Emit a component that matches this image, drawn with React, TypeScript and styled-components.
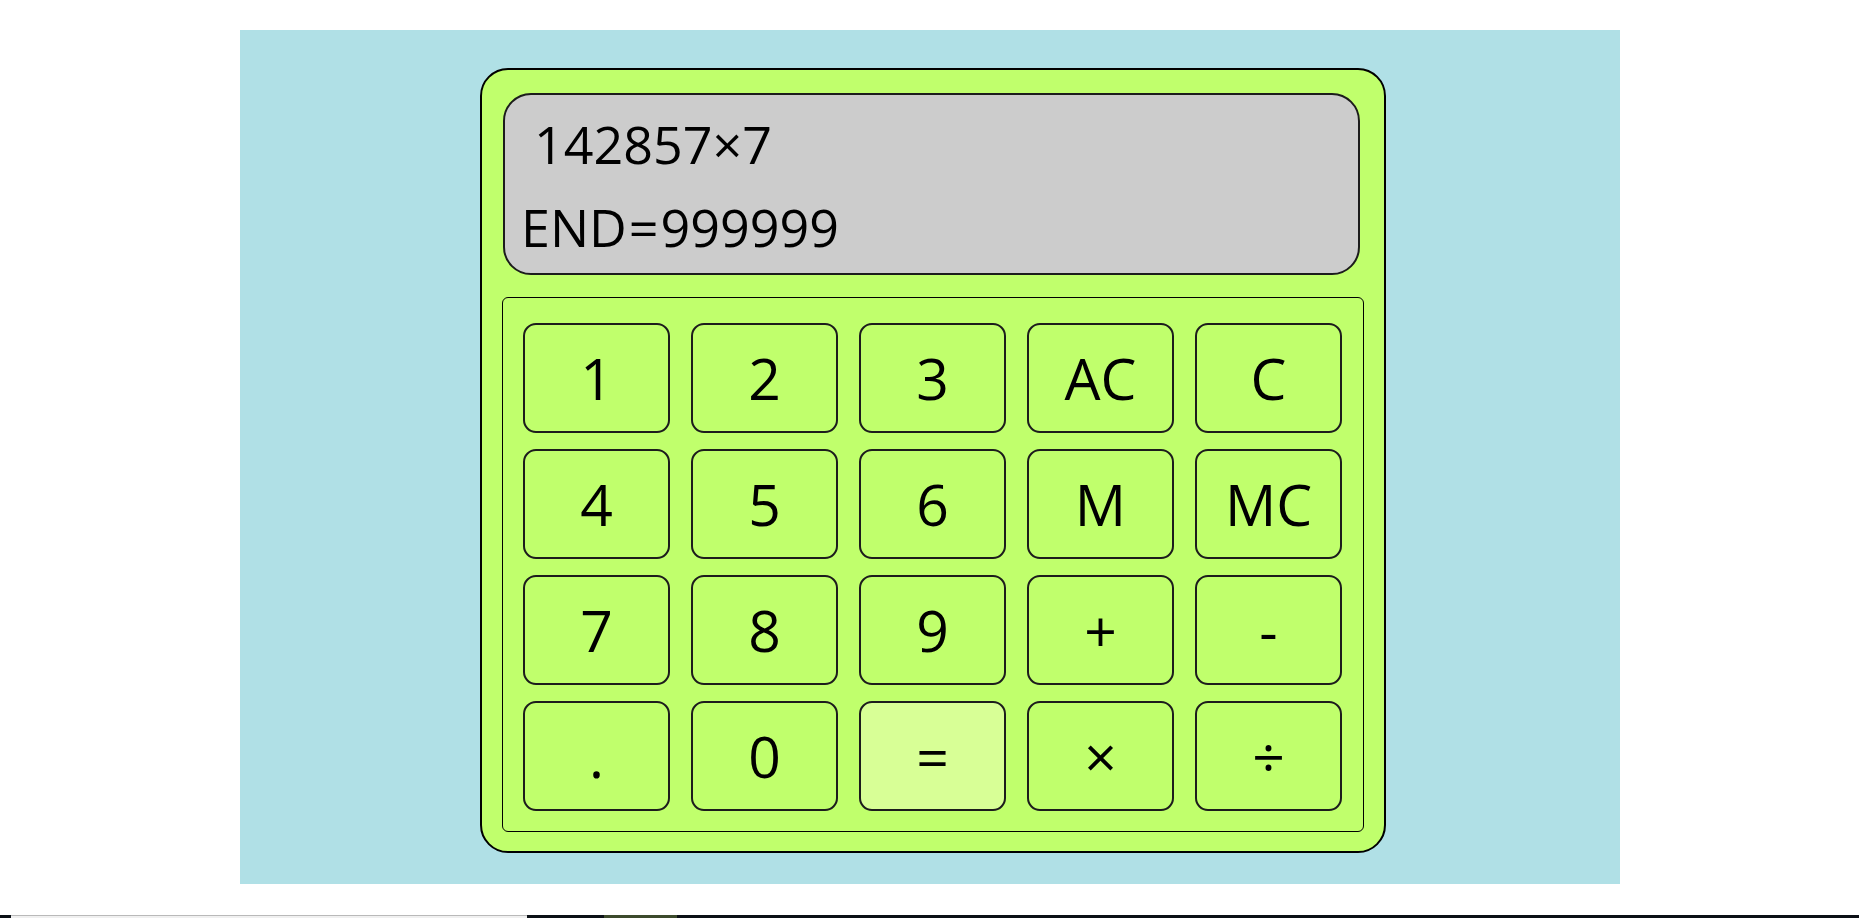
import React from 'react'
import styled, { createGlobalStyle } from 'styled-components'

const GlobalStyle = createGlobalStyle`
  html, body {
    margin: 0;
    padding: 0;
    background: #ffffff;
  }
  body {
    font-family: "Open Sans", "Noto Sans", sans-serif;
  }
`

const Page = styled.div`
  display: flex;
  flex-direction: column;
  min-height: 918px;
  box-sizing: border-box;
  padding-top: 30px;
`

const Stage = styled.div`
  box-sizing: border-box;
  width: 1380px;
  height: 854px;
  margin-left: 240px;
  padding: 38px 0 0 240px;
  background-color: #b0e0e6;
`

const Calculator = styled.div`
  box-sizing: border-box;
  width: 906px;
  height: 785px;
  padding: 23px 20px 0 21px;
  display: flex;
  flex-direction: column;
  gap: 22px;
  background-color: #c0ff6c;
  border: 2px solid #000;
  border-radius: 28px;
`

const Display = styled.div`
  box-sizing: border-box;
  width: 857px;
  height: 182px;
  padding: 7px 16px 0;
  background-color: #cccccc;
  border: 2px solid #1c1c1c;
  border-radius: 28px;
  color: #000;
  font-size: 52px;
  line-height: 83px;
`

const Line = styled.div<{ $indent?: boolean }>`
  white-space: nowrap;
  padding-left: ${p => (p.$indent ? '13px' : '0')};
`

const Eq = styled.span`
  padding: 0 2px;
`

const Keypad = styled.div`
  box-sizing: border-box;
  width: 862px;
  height: 535px;
  margin-left: -1px;
  padding: 25px 20px 0 20px;
  display: grid;
  grid-template-columns: repeat(5, 147px);
  grid-auto-rows: 110px;
  column-gap: 21px;
  row-gap: 16px;
  border: 1px solid #000;
  border-radius: 6px;
`

const Key = styled.button<{ $lit?: boolean }>`
  box-sizing: border-box;
  display: flex;
  align-items: center;
  justify-content: center;
  padding: 0;
  margin: 0;
  background-color: ${p => (p.$lit ? '#d8ff96' : '#c0ff6c')};
  border: 2px solid #1c1c1c;
  border-radius: 13px;
  color: #000;
  font-family: "Open Sans", "Noto Sans", sans-serif;
  font-size: 57px;
  line-height: 1;
  cursor: pointer;
`

const Taskbar = styled.div`
  margin-top: auto;
  height: 3px;
  display: flex;
  background-color: #0b1016;
`

const TaskSlot = styled.div<{ $w: number; $c: string; $top?: string }>`
  width: ${p => p.$w}px;
  background-color: ${p => p.$c};
  border-top: ${p => (p.$top ? `1px solid ${p.$top}` : 'none')};
  box-sizing: border-box;
`

const keys = [
  '1', '2', '3', 'AC', 'C',
  '4', '5', '6', 'M', 'MC',
  '7', '8', '9', '+', '-',
  '.', '0', '=', '×', '÷',
]

export default function App() {
  return (
    <>
      <GlobalStyle />
      <Page>
        <Stage>
          <Calculator>
            <Display>
              <Line $indent>142857×7</Line>
              <Line>
                END<Eq>=</Eq>999999
              </Line>
            </Display>
            <Keypad>
              {keys.map(k => (
                <Key key={k} $lit={k === '='}>
                  {k}
                </Key>
              ))}
            </Keypad>
          </Calculator>
        </Stage>
        <Taskbar>
          <TaskSlot $w={11} $c="#0b1016" />
          <TaskSlot $w={516} $c="#f0f0f0" $top="#b9b9b9" />
          <TaskSlot $w={77} $c="#0b1016" />
          <TaskSlot $w={73} $c="#3c4a2c" />
        </Taskbar>
      </Page>
    </>
  )
}
